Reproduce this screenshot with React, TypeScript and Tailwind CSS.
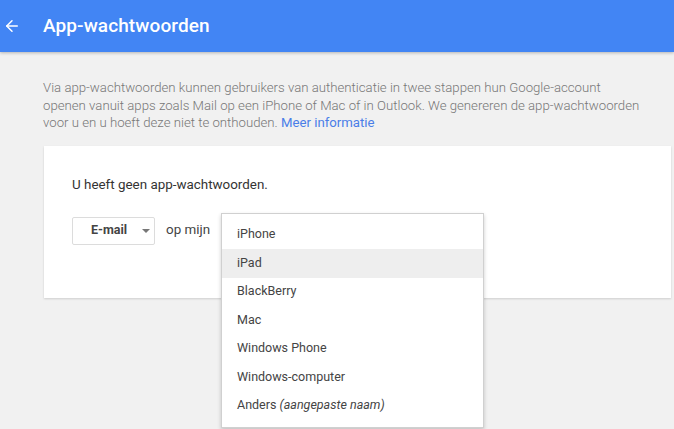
import { ArrowLeft } from 'lucide-react';

const devices = ['iPhone', 'iPad', 'BlackBerry', 'Mac', 'Windows Phone', 'Windows-computer'];

export default function App() {
  return (
    <div className="w-[674px] h-[429px] overflow-hidden bg-[#f1f1f1] font-['Roboto',sans-serif]">
      {/* Header */}
      <header className="h-[52px] bg-[#4285f4] flex items-center shadow-[0_1px_3px_rgba(0,0,0,0.25)]">
        <ArrowLeft className="w-[18px] h-[18px] text-white ml-[3px]" strokeWidth={2} />
        <h1 className="ml-[22px] text-[19px] font-medium text-white tracking-[0.1px]">App-wachtwoorden</h1>
      </header>

      {/* Intro */}
      <p className="mt-[27px] ml-[43px] whitespace-nowrap text-[13.2px] leading-[17.5px] text-[#777] font-light">
        Via app-wachtwoorden kunnen gebruikers van authenticatie in twee stappen hun Google-account
        <br />
        openen vanuit apps zoals Mail op een iPhone of Mac of in Outlook. We genereren de app-wachtwoorden
        <br />
        voor u en u hoeft deze niet te onthouden. <span className="text-[#4a7ee8] font-normal">Meer informatie</span>
      </p>

      {/* Card */}
      <div className="mt-[14px] ml-[44px] w-[627px] h-[152px] bg-white shadow-[0_1px_2px_rgba(0,0,0,0.15)] pl-[28px] pt-[31px]">
        <p className="text-[13.4px] text-[#333] leading-[16px]">U heeft geen app-wachtwoorden.</p>

        <div className="relative mt-[24px] flex items-center">
          <button className="w-[83px] h-[28px] border border-[#dcdcdc] rounded-[2px] flex items-center pl-[18px] text-[12.5px] font-bold text-[#444]">
            E-mail
            <span className="ml-[15px] w-0 h-0 border-l-[4px] border-r-[4px] border-t-[4px] border-l-transparent border-r-transparent border-t-[#777]" />
          </button>
          <span className="ml-[11px] text-[13.4px] text-[#444]">op mijn</span>

          {/* Dropdown menu */}
          <div className="absolute left-[149px] top-[-4px] w-[263px] bg-white border border-[#d0d0d0] shadow-[0_2px_4px_rgba(0,0,0,0.2)] py-[7px] z-10">
            {devices.map((d) => (
              <div
                key={d}
                className={`h-[28.5px] flex items-center pl-[15px] text-[12.5px] text-[#444] ${
                  d === 'iPad' ? 'bg-[#eeeeee]' : ''
                }`}
              >
                {d}
              </div>
            ))}
            <div className="h-[28.5px] flex items-center pl-[15px] text-[12.5px] text-[#444]">
              Anders&nbsp;<i>(aangepaste naam)</i>
            </div>
          </div>
        </div>
      </div>
    </div>
  );
}
